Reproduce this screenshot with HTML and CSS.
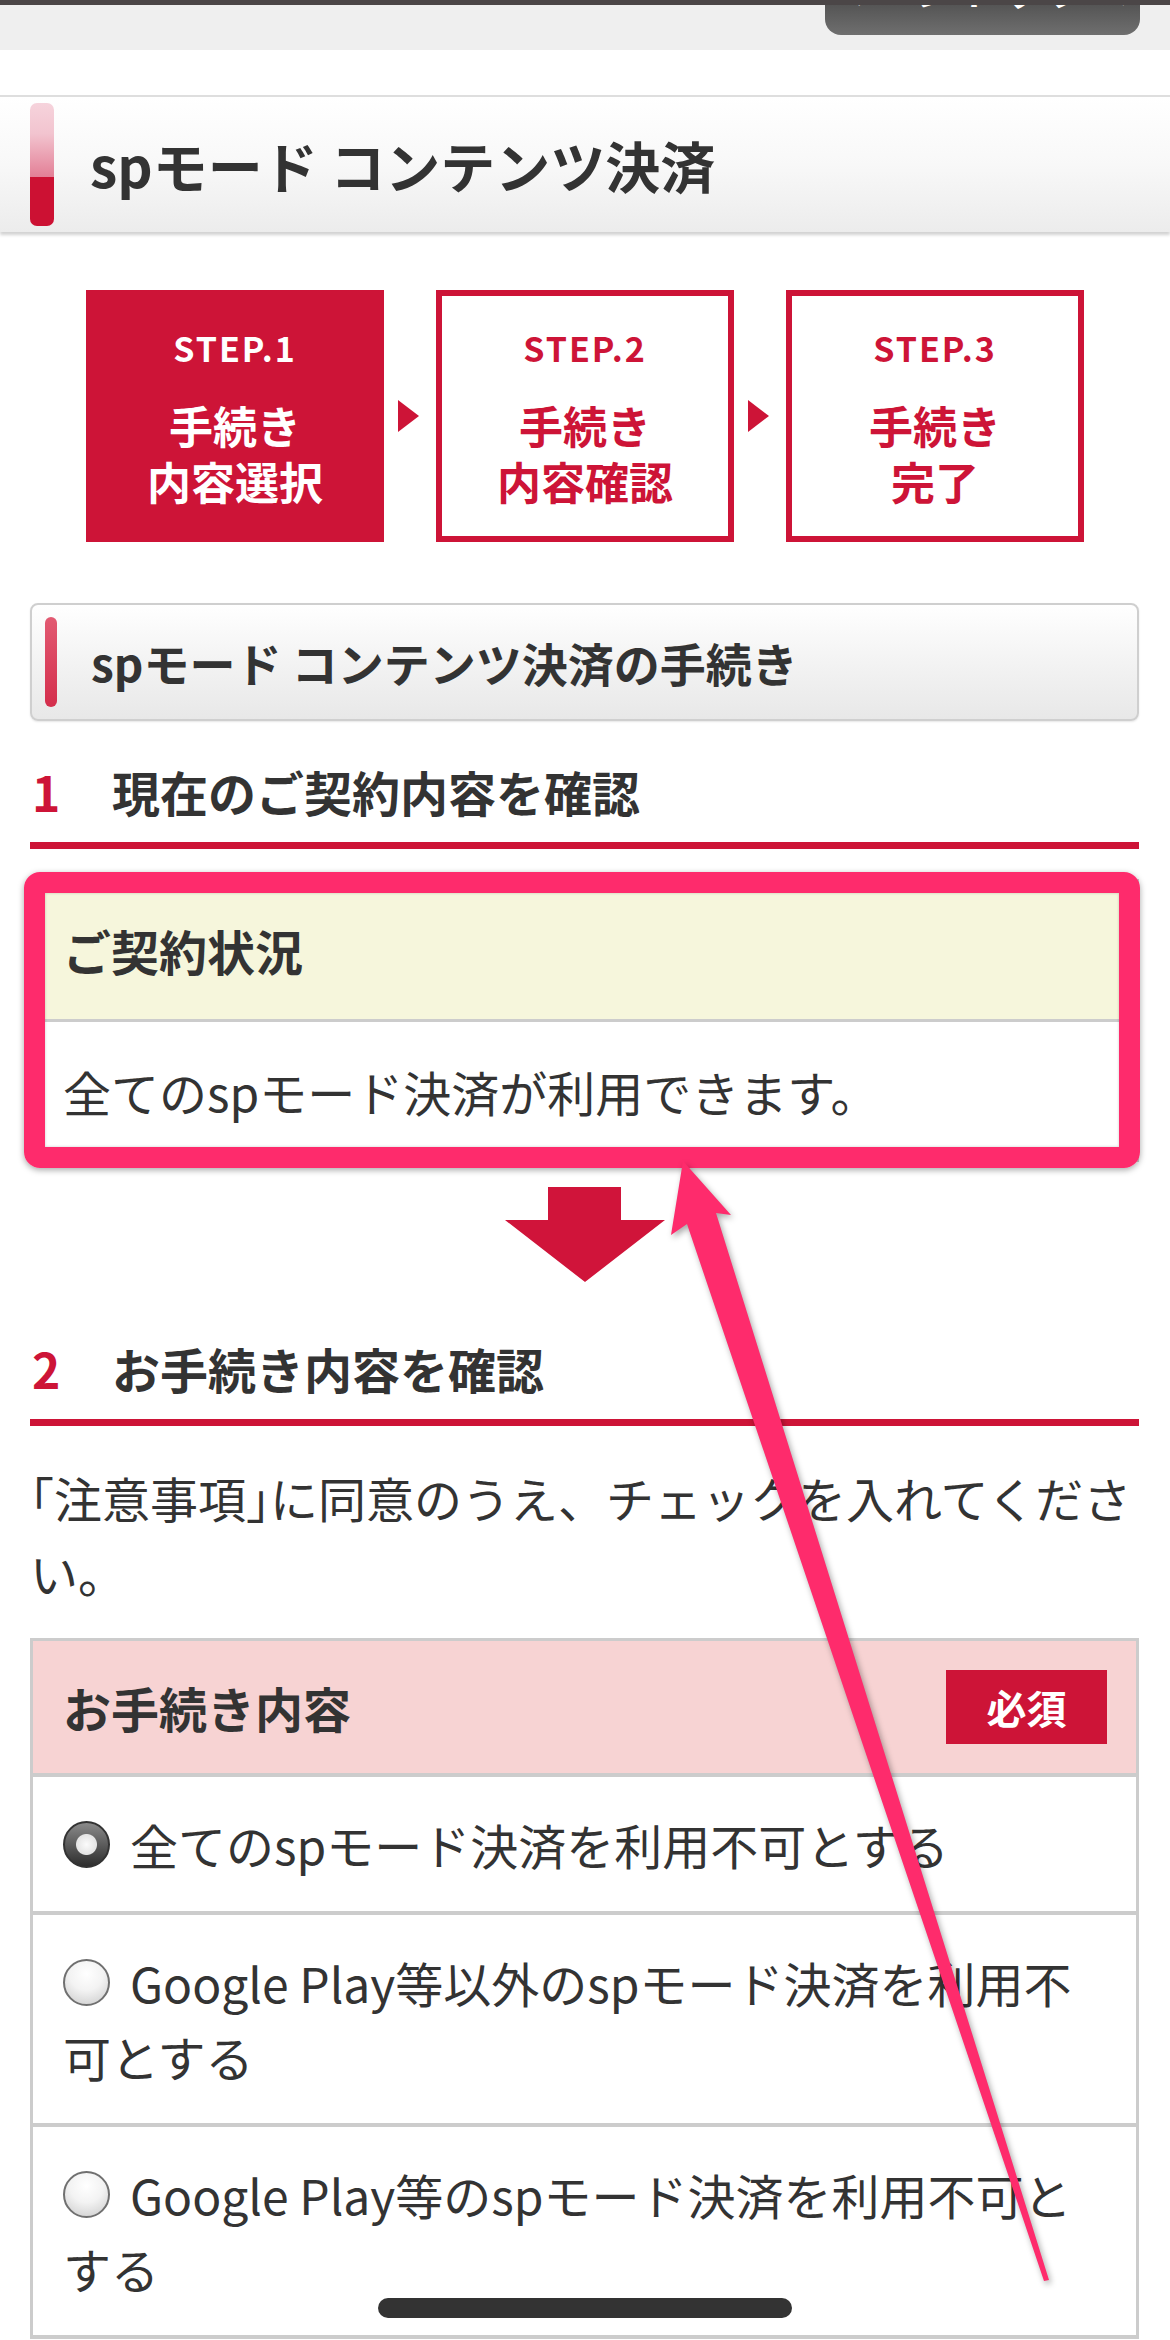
FILE: index.html
```html
<!DOCTYPE html>
<html lang="ja">
<head>
<meta charset="utf-8">
<title>spモード コンテンツ決済</title>
<link rel="stylesheet" href="styles.css">
</head>
<body>
<div class="page">
  <div class="topbar">
    <div class="topbtn"><span>ページトップへ</span></div>
  </div>
  <div class="spacer"></div>
  <div class="titlebar">
    <span class="title-accent"></span>
    <h1 class="title">spモード コンテンツ決済</h1>
  </div>

  <div class="steps">
    <div class="step active">
      <div class="step-no">STEP.1</div>
      <div class="step-name">手続き<br>内容選択</div>
    </div>
    <div class="step-arrow"><span></span></div>
    <div class="step">
      <div class="step-no">STEP.2</div>
      <div class="step-name">手続き<br>内容確認</div>
    </div>
    <div class="step-arrow"><span></span></div>
    <div class="step">
      <div class="step-no">STEP.3</div>
      <div class="step-name">手続き<br>完了</div>
    </div>
  </div>

  <div class="content">
    <div class="box-head"><span class="box-accent"></span><span class="box-title">spモード コンテンツ決済の手続き</span></div>

    <h2 class="sec"><span class="num">1</span>現在のご契約内容を確認</h2>

    <div class="contract">
      <div class="c-row c-head">ご契約状況</div>
      <div class="c-row c-body">全てのspモード決済が利用できます。</div>
    </div>

    <div class="down">
      <svg width="160" height="95" viewBox="0 0 160 95"><polygon points="43,0 116,0 116,33 160,33 80,95 0,33 43,33" fill="#d0143a"/></svg>
    </div>

    <h2 class="sec"><span class="num">2</span>お手続き内容を確認</h2>

    <p class="note"><span class="nowrap"><span class="half">「</span>注意事項<span class="half">」</span>に同意のうえ、チェックを入れてくださ</span><br>い。</p>

    <div class="form">
      <div class="form-head"><span class="form-title">お手続き内容</span><span class="req">必須</span></div>
      <div class="opt"><span class="radio on"></span>全てのspモード決済を利用不可とする</div>
      <div class="opt"><span class="radio"></span><span class="nowrap">Google Play等以外のspモード決済を利用不</span><br>可とする</div>
      <div class="opt"><span class="radio"></span><span class="nowrap">Google Play等のspモード決済を利用不可と</span><br>する</div>
    </div>
  </div>

  <svg class="annot" width="1170" height="2340" viewBox="0 0 1170 2340">
    <polygon class="annot-arrow" points="683,1161 731,1215 716,1213 1049,2280 1044,2281 687,1224 671,1235"/>
  </svg>
  <div class="home"></div>
</div>
</body>
</html>
```
FILE: styles.css
```css
* { box-sizing: border-box; }
html, body { margin: 0; padding: 0; background: #fff; }
body {
  font-family: "Noto Sans CJK JP", "Noto Sans", sans-serif;
  color: #333;
  width: 1170px;
  height: 2340px;
  overflow: hidden;
}
.page { position: relative; width: 1170px; height: 2340px; overflow: hidden; }
.nowrap { white-space: nowrap; }
.half { font-feature-settings: "halt" 1; }

.topbar {
  height: 50px;
  border-top: 5px solid #4b4647;
  background: #efefef;
  display: flex;
  justify-content: flex-end;
  padding-right: 30px;
}
.topbtn {
  width: 315px;
  height: 30px;
  border-radius: 0 0 16px 16px;
  background: linear-gradient(#555, #6f6f6f);
  overflow: hidden;
  text-align: center;
}
.topbtn span {
  display: block;
  margin-top: -35px;
  font-size: 36px;
  line-height: 40px;
  color: #fff;
  font-weight: 700;
  letter-spacing: 8px;
}
.spacer { height: 45px; background: #fff; }

.titlebar {
  height: 137px;
  border-top: 2px solid #dedede;
  background: linear-gradient(#ffffff, #f8f8f8 50%, #ececec);
  box-shadow: 0 3px 3px rgba(0,0,0,0.18);
  display: flex;
  align-items: center;
  padding-left: 30px;
}
.title-accent {
  width: 24px;
  height: 123px;
  border-radius: 7px;
  background: linear-gradient(#f6d3dc 0%, #f2c4cf 25%, #e37f96 60%, #cc1133 60%, #cc1133 100%);
  flex: none;
}
.title {
  margin: 0 0 0 36px;
  font-size: 55px;
  font-weight: 700;
  line-height: 1;
  color: #333;
}

.steps {
  margin-top: 58px;
  display: flex;
  justify-content: center;
}
.step {
  width: 298px;
  height: 252px;
  border: 6px solid #cd1437;
  background: #fff;
  color: #cd1437;
  text-align: center;
  padding-top: 32px;
}
.step.active { background: #cd1437; color: #fff; }
.step-no {
  font-size: 34px;
  line-height: 40px;
  font-weight: 700;
  letter-spacing: 2px;
}
.step-name {
  margin-top: 29px;
  font-size: 44px;
  line-height: 56px;
  font-weight: 700;
}
.step-arrow {
  width: 52px;
  display: flex;
  align-items: center;
  justify-content: center;
}
.step-arrow span {
  width: 0; height: 0;
  border-left: 21px solid #cd1437;
  border-top: 16px solid transparent;
  border-bottom: 16px solid transparent;
  margin-left: -4px;
}

.content { padding: 0 31px 0 30px; }

.box-head {
  margin-top: 61px;
  height: 118px;
  border: 2px solid #cfcfcf;
  border-radius: 8px;
  background: linear-gradient(#ffffff, #f3f3f3 50%, #e8e8e8);
  box-shadow: 0 1px 2px rgba(0,0,0,0.1);
  display: flex;
  align-items: center;
  padding-left: 13px;
}
.box-accent {
  width: 12px;
  height: 90px;
  border-radius: 6px;
  background: linear-gradient(#e25a72, #d42e4c);
  flex: none;
}
.box-title {
  margin-left: 34px;
  font-size: 46px;
  font-weight: 700;
  color: #333;
}

.sec {
  margin: 40px 0 0;
  font-size: 48px;
  line-height: 60px;
  font-weight: 700;
  color: #333;
  padding-bottom: 21px;
  border-bottom: 7px solid #cd1437;
}
.sec .num {
  display: inline-block;
  width: 82px;
  padding-left: 2px;
  color: #cd1437;
}

.contract {
  position: relative;
  margin-top: 30px;
  border: 2px solid #ccc;
}
.contract::after {
  content: "";
  position: absolute;
  top: -9px; left: -8px; right: -3px; bottom: -8px;
  border: 21px solid #fe2b6c;
  border-radius: 16px;
  box-shadow: 0 2px 6px rgba(0,0,0,0.35), inset 0 0 3px rgba(0,0,0,0.2);
}
.c-row {
  padding: 39px 31px;
  font-size: 48px;
  line-height: 60px;
}
.c-head {
  background: #f6f6dc;
  font-weight: 700;
  border-bottom: 3px solid #ccc;
}
.c-body { background: #fff; }

.down {
  margin-top: 25px;
  display: flex;
  justify-content: center;
  height: 95px;
}
.down + .sec { margin-top: 56px; }

.note {
  margin: 34px 0 0;
  font-size: 48px;
  line-height: 75px;
  color: #333;
}

.form {
  margin-top: 28px;
  border: 3px solid #ccc;
  border-bottom: none;
}
.form-head {
  height: 136px;
  background: #f7d3d3;
  border-bottom: 4px solid #ccc;
  display: flex;
  align-items: center;
  justify-content: space-between;
  padding: 0 29px 0 30px;
}
.form-title { font-size: 48px; font-weight: 700; color: #333; }
.req {
  width: 161px;
  height: 74px;
  background: #cd1437;
  color: #fff;
  font-size: 40px;
  font-weight: 700;
  display: flex;
  align-items: center;
  justify-content: center;
}
.opt {
  padding: 30px 30px;
  font-size: 48px;
  line-height: 74px;
  color: #333;
  border-bottom: 4px solid #ccc;
}
.radio {
  display: inline-block;
  width: 47px;
  height: 47px;
  border-radius: 50%;
  vertical-align: top;
  margin: 14px 20px 0 0;
  border: 2px solid #707070;
  background: radial-gradient(circle at 50% 30%, #ffffff 0%, #f3f3f3 45%, #c9c9c9 100%);
}
.radio.on {
  border: 2px solid #333;
  background:
    radial-gradient(circle at 50% 50%, #fbfbfb 0, #e4e4e4 10px, transparent 11px),
    linear-gradient(#8a8a8a, #2e2e2e);
}

.annot {
  position: absolute;
  top: 0; left: 0;
  pointer-events: none;
}
.annot-arrow {
  fill: #fe2b6c;
  filter: drop-shadow(2px 3px 3px rgba(0,0,0,0.35));
}
.home {
  position: absolute;
  left: 378px;
  top: 2298px;
  width: 414px;
  height: 20px;
  border-radius: 10px;
  background: #333;
}
```
